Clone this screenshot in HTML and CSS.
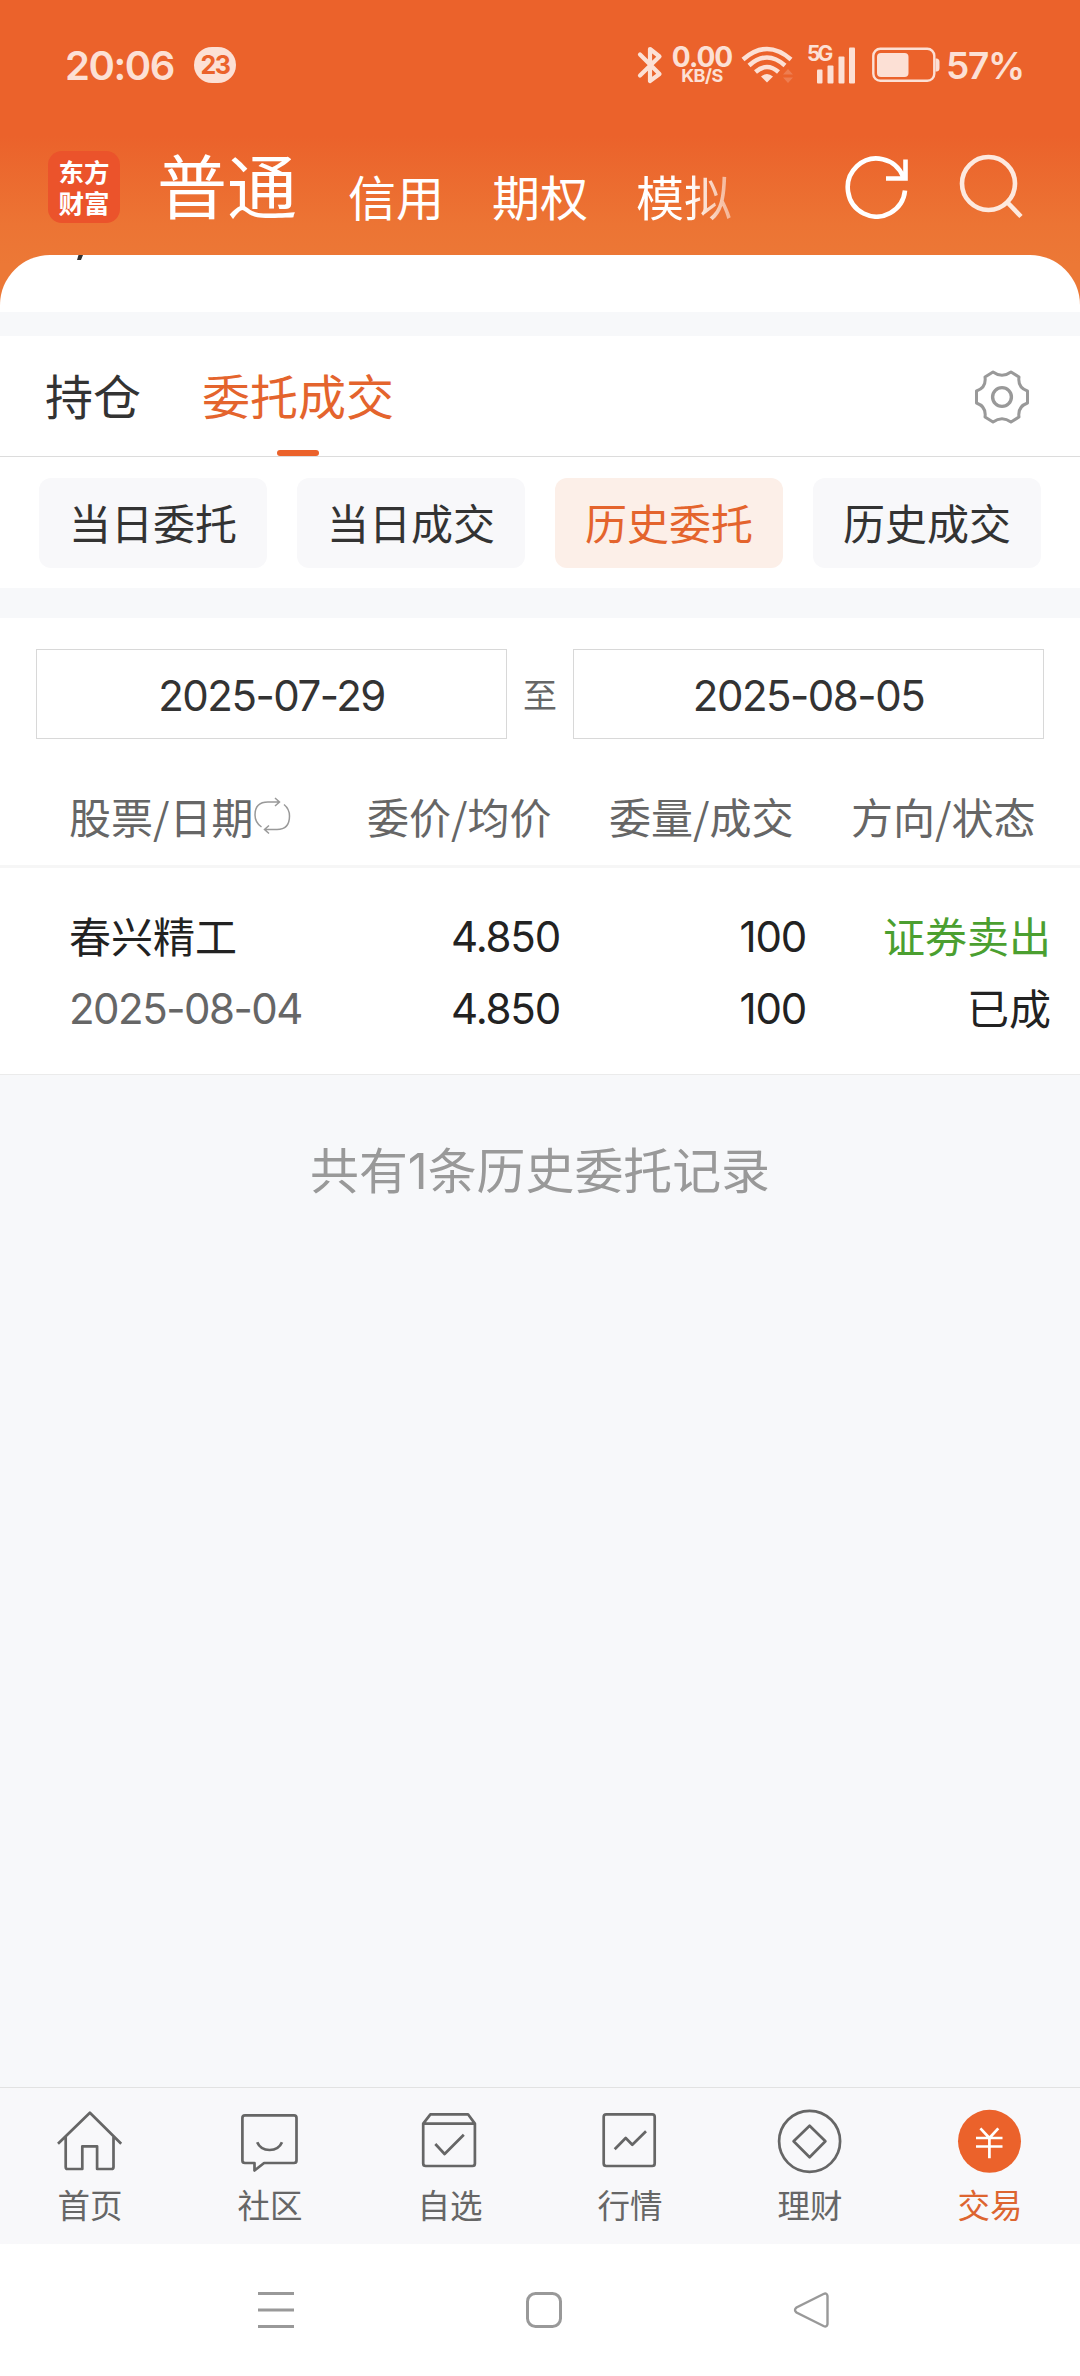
FILE: index.html
```html
<!DOCTYPE html>
<html lang="zh-CN">
<head>
<meta charset="utf-8">
<title>委托成交</title>
<link rel="stylesheet" href="styles.css">
</head>
<body>
<div class="app">
  <header class="top">
    <div class="status">
      <span class="clock">20:06</span>
      <span class="badge">23</span>
      <svg class="bluetooth" width="26" height="40" viewBox="0 0 26 40"><path d="M3 9.500L22.500 29L13 36V4L22.500 11.500L3 30.500" fill="none" stroke="currentColor" stroke-width="4.200" stroke-linejoin="round" stroke-linecap="round"/></svg>
      <div class="speed"><span class="rate">0.00</span><span class="unit">KB/S</span></div>
      <svg class="wifi" width="54" height="40" viewBox="0 0 54 40">
        <g fill="none" stroke="currentColor" stroke-width="4.500"><path d="M2 14.500Q26 -6.500 50 14.500"/><path d="M8 20.500Q26 4.500 44 20.500"/><path d="M14.500 27Q26 17 37.500 27"/></g>
        <path d="M20 31.500Q26 26.500 32 31.500L26 37.500Z" fill="currentColor"/>
        <path d="M42 29.500L47 24L52 29.500ZM42 32.500L47 38L52 32.500Z" fill="currentColor" opacity=".22"/>
      </svg>
      <div class="cell">
        <span class="gen">5G</span>
        <svg width="50" height="40" viewBox="0 0 50 40"><g fill="currentColor"><rect x="10" y="24.500" width="5.500" height="14" rx="1"/><rect x="20.500" y="20.500" width="6" height="18" rx="1"/><rect x="31.500" y="11.500" width="6" height="27" rx="1"/><rect x="42" y="2.500" width="6" height="36" rx="1"/></g></svg>
      </div>
      <svg class="battery" width="68" height="36" viewBox="0 0 68 36"><rect x="1.300" y="1.800" width="61" height="32" rx="7" fill="none" stroke="currentColor" stroke-width="2.400"/><rect x="5" y="6" width="31.500" height="24" rx="4" fill="currentColor"/><path d="M63.500 11.500H65Q67.500 12 67.500 15V21Q67.500 24 65 24.500H63.500Z" fill="currentColor"/></svg>
      <span class="percent">57%</span>
    </div>
    <div class="brandbar">
      <div class="logo"><span>东方</span><span>财富</span></div>
      <h1 class="account">普通</h1>
      <nav class="modes"><span>信用</span><span>期权</span><span class="fade">模拟</span></nav>
      <svg class="refresh" width="66" height="66" viewBox="0 0 66 66"><path d="M61 37.500A28.700 29 0 1 1 59 23.500M61.500 6.500V25.500H42" fill="none" stroke="#fff" stroke-width="4.600"/></svg>
      <svg class="search" width="66" height="66" viewBox="0 0 66 66"><g fill="none" stroke="#fde9df" stroke-width="4.600"><ellipse cx="31.500" cy="30.500" rx="26.500" ry="26.500"/><path d="M50.500 49.500L64 63.500"/></g></svg>
    </div>
  </header>

  <section class="sheet"><svg width="8" height="6" viewBox="0 0 8 6"><path d="M1.500 0H6L4 5H0Z" fill="#333"/></svg></section>

  <section class="tabs">
    <span class="tab">持仓</span>
    <span class="tab active">委托成交</span>
    <svg class="gear" width="60" height="60" viewBox="-30 -30 60 60"><g fill="none" stroke="#999" stroke-width="3" stroke-linejoin="round"><path d="M-9 -25Q0 -18.500 9 -25L17 -20Q15.500 -9.500 25.500 -6V6Q15.500 9.500 17 20L9 25Q0 18.500 -9 25L-17 20Q-15.500 9.500 -25.500 6V-6Q-15.500 -9.500 -17 -20Z"/><circle r="9.400" stroke-width="3.400"/></g></svg>
  </section>

  <section class="chips">
    <span class="chip">当日委托</span><span class="chip">当日成交</span><span class="chip on">历史委托</span><span class="chip">历史成交</span>
  </section>

  <main class="orders">
    <div class="range"><span class="date">2025-07-29</span><span class="to">至</span><span class="date">2025-08-05</span></div>
    <div class="head">
      <span class="sort">股票/日期<svg width="38" height="38" viewBox="0 0 38 38"><path d="M8.500 30Q2 25.500 2 18Q2 5 15 5H26.500M22 1L26.500 5L22 9M31 7.500Q36.500 12 36.500 19Q36.500 32.500 24 32.500H11.500M16 28.500L11.500 32.500L16 36.500" fill="none" stroke="#999" stroke-width="1.500"/></svg></span>
      <span>委价/均价</span><span>委量/成交</span><span>方向/状态</span>
    </div>
    <div class="row">
      <div class="cellcol name"><span>春兴精工</span><span class="num sub">2025-08-04</span></div>
      <div class="cellcol num"><span>4.850</span><span>4.850</span></div>
      <div class="cellcol num"><span>100</span><span>100</span></div>
      <div class="cellcol"><span class="sell">证券卖出</span><span>已成</span></div>
    </div>
  </main>

  <p class="empty">共有<span class="one">1</span>条历史委托记录</p>

  <nav class="tabbar">
    <a class="item"><svg viewBox="0 0 72 72"><path d="M4 38.700L35.900 7.700L67.200 38.700M11.700 32V62Q11.700 64 13.500 64H28.300V41.300H43.100V64H57.500Q59.500 64 59.500 62V32"/></svg><span>首页</span></a>
    <a class="item"><svg viewBox="0 0 72 72"><path d="M11 10.300H60Q62.500 10.300 62.500 13V55.500Q62.500 58 60 58H30.100L20.500 65.500V58H11Q8.400 58 8.400 55.500V13Q8.400 10.300 11 10.300Z"/><path d="M23.200 37.300Q26.500 45 35.600 45T48 37.300"/></svg><span>社区</span></a>
    <a class="item"><svg viewBox="0 0 72 72"><path d="M9.200 18.600L16.400 9.300H54L60.900 18.600V58.500Q60.900 61 58.500 61H11.700Q9.200 61 9.200 58.500ZM9.200 18.600H60.900M21.300 39L30.600 49L49.800 29.700"/></svg><span>自选</span></a>
    <a class="item"><svg viewBox="0 0 72 72"><rect x="9.700" y="9.300" width="51" height="51.700" rx="2.500"/><path d="M20.700 44.300L31.700 33L38.300 39.700L52 26.300"/></svg><span>行情</span></a>
    <a class="item"><svg viewBox="0 0 72 72"><ellipse cx="35.600" cy="36.300" rx="30.500" ry="30.500"/><path d="M35.600 20.800L51.400 36.300L35.600 52.200L19.600 36.300Z"/></svg><span>理财</span></a>
    <a class="item current"><svg viewBox="0 0 72 72"><circle cx="35.500" cy="36.300" r="31.500" class="coin"/><path class="yen" d="M26.400 23.300L35.400 33L44.300 23.300M35.400 32V53.300M22 33H48.500M22 41.500H48.500"/></svg><span>交易</span></a>
  </nav>

  <footer class="sysnav">
    <svg width="40" height="40" viewBox="0 0 40 40"><path d="M2 3.500H38M2 20H38M2 36.500H38"/></svg>
    <svg width="40" height="40" viewBox="0 0 40 40"><rect x="3.500" y="3.500" width="33" height="33" rx="8"/></svg>
    <svg width="40" height="40" viewBox="0 0 40 40"><path d="M31.500 4Q35 2.500 35.500 6V34Q35 37.500 31.500 36L4.500 22.500Q1.500 20 4.500 17.500Z" stroke-width="2.400"/></svg>
  </footer>
</div>
</body>
</html>
```
FILE: styles.css
```css
* { box-sizing: border-box; }
body {
  margin: 0;
  background: #fff;
  color: #333;
  font-family: "Noto Sans CJK SC", sans-serif;
}
.app {
  display: flex;
  flex-direction: column;
  width: 1080px;
  height: 2376px;
  background: #f7f8fa;
  overflow: hidden;
}
svg { display: block; flex: none; }

.top {
  flex: none;
  height: 311px;
  margin-bottom: -56px;
  background: linear-gradient(#eb622b 0, #eb622b 136px, #ec7434 225px, #ec7836 265px);
  color: #fce0d5;
}
.status {
  display: flex;
  align-items: center;
  height: 130px;
  padding-left: 65px;
  font-family: Inter, sans-serif;
  font-weight: 600;
  white-space: nowrap;
}
.clock { width: 129px; font-size: 40px; letter-spacing: -1.400px; }
.badge {
  display: flex;
  align-items: center;
  justify-content: center;
  width: 42px;
  height: 36px;
  border-radius: 18px;
  background: #fce0d5;
  color: #eb622b;
  font-size: 25px;
  font-weight: 700;
  letter-spacing: -1.5px;
}
.bluetooth { margin-left: 401px; }
.speed { display: flex; flex-direction: column; align-items: center; width: 60px; margin-left: 9px; font-weight: 700; }
.rate { font-size: 28px; line-height: 22px; letter-spacing: -1px; }
.unit { font-size: 18px; line-height: 16px; letter-spacing: -.5px; }
.wifi { margin-left: 9px; }
.cell { position: relative; margin-left: 12px; }
.gen { position: absolute; left: 0; top: 0; font-size: 21px; font-weight: 700; line-height: 18px; letter-spacing: -3px; }
.battery { margin-left: 15px; }
.percent { margin-left: 6px; font-size: 37px; letter-spacing: -1.300px; }

.brandbar { display: flex; height: 125px; padding-left: 48px; color: #fff; }
.logo {
  width: 72px;
  height: 72px;
  margin-top: 21px;
  padding-top: 4px;
  border-radius: 14px;
  background: #eb532b;
  font-size: 25.500px;
  font-weight: 700;
  line-height: 31px;
  text-align: center;
}
.logo span { display: block; }
.account { width: 142px; margin: 4px 0 0 37px; font-size: 70px; font-weight: 400; line-height: 100px; }
.modes { display: flex; gap: 48px; width: 496px; margin: 30px 0 0 49px; font-size: 48px; line-height: 70px; }
.fade {
  background: linear-gradient(90deg, #fff 55%, rgba(255, 255, 255, .45) 100%);
  -webkit-background-clip: text;
  background-clip: text;
  color: transparent;
}
.refresh { margin-top: 23px; }
.search { margin: 23px 0 0 47px; }

.sheet { flex: none; height: 57px; padding-left: 77px; border-radius: 50px 50px 0 0; background: #fff; }

.tabs {
  display: flex;
  flex: none;
  height: 121px;
  margin-top: 24px;
  padding: 0 48px 0 45px;
  border-bottom: 1px solid #dcdcdc;
  background: #fff;
  font-size: 48px;
  line-height: 117px;
}
.tab { margin-right: 61px; }
.active { display: flex; flex-direction: column; align-items: center; color: #e4642d; }
.active::after { content: ""; width: 42px; height: 6px; margin-top: -3px; border-radius: 3px; background: #eb622b; }
.gear { margin: 31px 0 0 auto; }

.chips { display: flex; flex: none; gap: 30px; height: 131px; padding: 21px 39px; background: #fff; }
.chip {
  flex: 1;
  height: 90px;
  border-radius: 12px;
  background: #f8f8fa;
  font-size: 42px;
  line-height: 88px;
  text-align: center;
}
.on { background: #fcefe8; color: #e4642d; }

.orders { flex: none; height: 457px; margin-top: 30px; border-bottom: 1px solid #ebebeb; background: #fff; }
.range { display: flex; align-items: center; padding: 31px 36px 0; }
.date {
  flex: 1;
  height: 90px;
  border: 1px solid #d8d8d8;
  font-family: Inter, sans-serif;
  font-size: 42px;
  letter-spacing: -1.500px;
  line-height: 91px;
  text-align: center;
}
.to { width: 66px; color: #666; font-size: 34px; line-height: 90px; text-align: center; }
.head {
  display: grid;
  grid-template-columns: 298px 242px 242px auto;
  height: 129px;
  padding-left: 69px;
  border-bottom: 3px solid #f6f6f6;
  color: #666;
  font-size: 42px;
  line-height: 154px;
}
.sort { display: flex; align-items: center; }
.row {
  display: grid;
  grid-template-columns: 300px 191px 246px 245px;
  padding: 31px 29px 0 69px;
  color: #222;
  font-size: 42px;
  line-height: 72px;
}
.cellcol { display: flex; flex-direction: column; align-items: flex-end; }
.name { align-items: flex-start; }
.num { font-family: Inter, sans-serif; letter-spacing: -1.200px; }
div.num { padding-top: 2px; }
.sub { padding-top: 2px; color: #666; letter-spacing: -1.500px; }
.sell { color: #4b9f30; }

.empty { flex: 1; margin: 0; padding-top: 57px; color: #999; font-size: 48.900px; line-height: 72px; text-align: center; }
.one { font-family: Inter, sans-serif; }

.tabbar { display: flex; flex: none; height: 157px; border-top: 1px solid #e2e2e2; background: #f8f8fa; }
.item { display: flex; flex: 1; flex-direction: column; align-items: center; padding-top: 17px; color: #666; font-size: 32.500px; line-height: 53px; }
.item svg { width: 72px; height: 72px; fill: none; stroke: #666; stroke-width: 2.700; stroke-linejoin: round; }
.current { color: #dd6530; }
.item .coin { fill: #eb622b; stroke: none; }
.item .yen { stroke: #fff; }

.sysnav { display: flex; flex: none; justify-content: center; gap: 228px; height: 132px; padding: 46px 0 0 7px; background: #fff; }
.sysnav svg { fill: none; stroke: #999; stroke-width: 3; }
```
